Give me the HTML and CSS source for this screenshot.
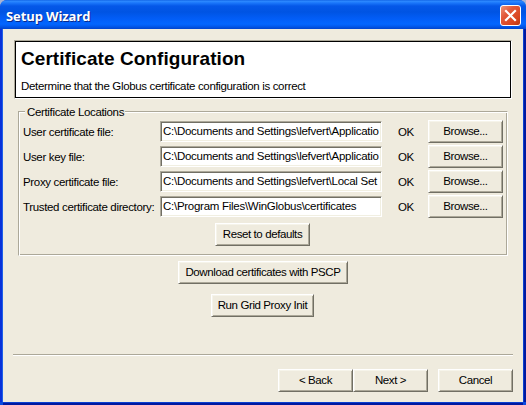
FILE: index.html
```html
<!DOCTYPE html>
<html lang="en">
<head>
<meta charset="utf-8">
<title>Setup Wizard</title>
<link rel="stylesheet" href="styles.css">
</head>
<body>
<div class="window">
  <header class="titlebar">
    <span class="title">Setup Wizard</span>
    <button class="close" aria-label="Close">
      <svg width="21" height="21" viewBox="0 0 21 21"><path d="M6 6 L15 15 M15 6 L6 15" stroke="#fff" stroke-width="2.2" stroke-linecap="square"/></svg>
    </button>
  </header>
  <main class="client">
    <section class="banner">
      <h1>Certificate Configuration</h1>
      <p>Determine that the Globus certificate configuration is correct</p>
    </section>
    <fieldset class="group">
      <legend>Certificate Locations</legend>
      <div class="row"><label>User certificate file:</label><div class="field">C:\Documents and Settings\lefvert\Applicatio</div><span class="status">OK</span><button class="btn">Browse...</button></div>
      <div class="row"><label>User key file:</label><div class="field">C:\Documents and Settings\lefvert\Applicatio</div><span class="status">OK</span><button class="btn">Browse...</button></div>
      <div class="row"><label>Proxy certificate file:</label><div class="field">C:\Documents and Settings\lefvert\Local Set</div><span class="status">OK</span><button class="btn">Browse...</button></div>
      <div class="row"><label>Trusted certificate directory:</label><div class="field">C:\Program Files\WinGlobus\certificates</div><span class="status">OK</span><button class="btn">Browse...</button></div>
      <button class="btn reset">Reset to defaults</button>
    </fieldset>
    <div class="actions">
      <button class="btn download">Download certificates with PSCP</button>
      <button class="btn run">Run Grid Proxy Init</button>
    </div>
    <footer class="footer">
      <button class="btn">&lt; Back</button><button class="btn">Next &gt;</button><button class="btn cancel">Cancel</button>
    </footer>
  </main>
</div>
</body>
</html>
```
FILE: styles.css
```css
* { box-sizing: border-box; }
body {
  margin: 0;
  background: #a9b4d4;
  font: 11.5px/14px "Liberation Sans", Arial, sans-serif;
  letter-spacing: -0.34px;
  color: #000;
  overflow: hidden;
}
button { font: inherit; letter-spacing: inherit; color: inherit; padding: 0; }
.window {
  width: 526px;
  height: 405px;
  display: flex;
  flex-direction: column;
  border-radius: 7px 7px 0 0;
  overflow: hidden;
  background: #0a4be0;
}
.titlebar {
  height: 29px;
  flex: none;
  display: flex;
  align-items: center;
  justify-content: space-between;
  padding: 2px 5px 0 6px;
  background: linear-gradient(#0a5ae0 0, #2f8cff 1px, #1a76fa 3px, #0558e8 6px, #0054e3 12px, #025cf5 18px, #0366ff 24px, #025bf0 26px, #0144cc 29px);
}
.title {
  font: bold 13px/16px "Open Sans", "Noto Sans", sans-serif;
  letter-spacing: -0.1px;
  color: #fff;
  text-shadow: 1px 1px 0 #0a2a8c;
}
.close {
  width: 21px;
  height: 21px;
  border: 1px solid #fff;
  border-radius: 3px;
  display: flex;
  align-items: center;
  justify-content: center;
  background: linear-gradient(135deg, #ee9478 0, #e2593a 35%, #d9451f 75%, #b93812 100%);
}
.close svg { flex: none; }
.client {
  flex: 1;
  margin: 0 3px 3px;
  padding: 11px 10px 10px 11px;
  background: #efebde;
  display: flex;
  flex-direction: column;
  box-shadow: -1px 0 #1d5fe8, 1px 0 #0b3fd0, 0 1px #0b3fd0, 0 3px #0019a0, 3px 0 #0019a0, -3px 0 #0831d9;
}
.banner {
  width: 498px;
  height: 59px;
  border: 1px solid;
  border-color: #aca899 #fff #fff #aca899;
  box-shadow: inset 0 0 0 1px #000;
  background: #fff;
  padding: 6px 6px;
}
.banner h1 { margin: 0; font: bold 19px/24px "Liberation Sans", Arial, sans-serif; letter-spacing: 0.06px; }
.banner p { margin: 8px 0 0; }
.group {
  position: relative;
  width: 490px;
  height: 145px;
  min-width: 0;
  margin: 12px 0 0 4px;
  padding: 8px 4px 0 4px;
  border: 1px solid;
  border-color: #aca899 #fff #fff #aca899;
  box-shadow: inset 1px 1px #fff, inset -1px -1px #aca899;
}
.group legend {
  position: absolute;
  left: 6px;
  top: -7px;
  padding: 0 2px;
  width: 100px;
  white-space: nowrap;
  background: #efebde;
}
.row { display: flex; align-items: flex-start; height: 25px; }
.row label { width: 137px; padding-top: 5px; white-space: nowrap; }
.field {
  width: 222px;
  height: 21px;
  margin-top: 1px;
  padding: 1px 2px;
  border: 1px solid;
  border-color: #aca899 #fff #fff #aca899;
  box-shadow: inset 1px 1px #716f64, inset -1px -1px #f1efe2;
  background: #fff;
  white-space: nowrap;
  line-height: 16px;
  letter-spacing: -0.27px;
  overflow: hidden;
}
.status { width: 46px; padding: 5px 0 0 16px; }
.btn {
  width: 75px;
  height: 23px;
  flex: none;
  border: 1px solid;
  border-color: #fff #716f64 #716f64 #fff;
  box-shadow: inset 1px 1px #f6f4ea, inset -1px -1px #aca899;
  background: #efebde;
  line-height: 14px;
  letter-spacing: -0.4px;
  padding-bottom: 2px;
}
.reset { display: block; width: 95px; margin: 3px 0 0 192px; }
.actions { display: flex; flex-direction: column; gap: 10px; margin-top: 5px; }
.download { width: 170px; margin-left: 164px; }
.run { width: 103px; margin-left: 197px; }
.footer {
  display: flex;
  justify-content: flex-end;
  margin: auto 0 0 -1px;
  padding-top: 14px;
  border-top: 1px solid #aca899;
  height: 38px;
  box-shadow: inset 0 1px #fff;
}
.cancel { margin-left: 10px; }
```
